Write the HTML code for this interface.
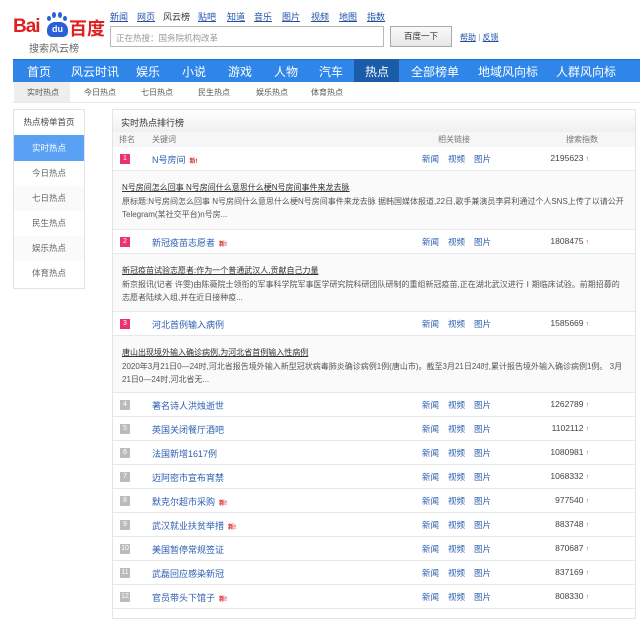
<!DOCTYPE html>
<html><head><meta charset="utf-8"><style>
*{margin:0;padding:0;box-sizing:border-box}
body{width:640px;height:612px;overflow:hidden;background:#fff;font-family:"Liberation Sans","Noto Sans CJK SC",sans-serif;font-size:8px;color:#333;position:relative}
.a{position:absolute;white-space:nowrap}
.tl a,.tl span{position:absolute;top:10px;color:#2250a8;text-decoration:underline;font-size:9px}
.nav{position:absolute;left:13px;top:59px;width:627px;height:23px;background:#2f86e8;border-top:1px solid #1c6fd4}
.nav span{position:absolute;top:3px;color:#fff;font-size:12px}
.sub span{position:absolute;top:87px;font-size:8px;color:#555}
.side{position:absolute;left:13px;top:109px;width:72px;height:180px;border:1px solid #e3e3e3}
.side div{height:25px;line-height:25px;text-align:center;font-size:8.5px;color:#666}
.panel{position:absolute;left:112px;top:109px;width:524px;height:510px;border:1px solid #e3e3e3}
.row{position:absolute;left:0;width:522px;height:24px;border-bottom:1px solid #e8e8e8;background:#fff}
.rk{position:absolute;left:7px;top:7px;width:10px;height:10px;font-size:7px;color:#fff;text-align:center;line-height:10px}
.kw{position:absolute;left:39px;top:6px;color:#2c5fb0;font-size:9px}
.kw i{color:#d22;font-style:normal;font-size:6px;font-weight:bold;margin-left:4px}
.lk{position:absolute;left:309px;top:6px;color:#2c5fb0;font-size:8.5px;word-spacing:0}
.lk b{font-weight:normal;margin-right:9px}
.num{position:absolute;right:46px;top:6px;font-size:8.5px;color:#444}
.num:after{content:"↑";color:#e33;font-size:7px;margin-left:2px;font-weight:bold}
.exp{position:absolute;left:0;width:522px;background:#fafafa;border-bottom:1px solid #e8e8e8;padding:10px 9px 0 9px;font-size:8px;line-height:13.5px;color:#555}
.exp u{color:#333}
</style></head><body>
<div class="a" style="left:13px;top:16px;font-size:19px;font-weight:bold;color:#e02020;letter-spacing:-1px">Bai</div>
<div class="a" style="left:47px;top:12px;width:20px;height:9px">
<span style="position:absolute;left:0;top:4px;width:4px;height:5px;background:#2a5fd8;border-radius:50%"></span>
<span style="position:absolute;left:5px;top:0;width:4px;height:6px;background:#2a5fd8;border-radius:50%"></span>
<span style="position:absolute;left:11px;top:0;width:4px;height:6px;background:#2a5fd8;border-radius:50%"></span>
<span style="position:absolute;left:16px;top:4px;width:4px;height:5px;background:#2a5fd8;border-radius:50%"></span></div>
<div class="a" style="left:47px;top:22px;width:21px;height:15px;background:#2a5fd8;border-radius:8px 8px 5px 5px;color:#fff;font-size:9px;text-align:center;line-height:15px;font-weight:bold">du</div>
<div class="a" style="left:69px;top:15px;font-size:18px;font-weight:bold;color:#e02020">百度</div>
<div class="a" style="left:29px;top:40px;font-size:10px;color:#666">搜索风云榜</div>
<div class="tl"><a style="left:110px">新闻</a><a style="left:137px">网页</a><span style="left:163px;color:#333;text-decoration:none">风云榜</span><a style="left:198px">贴吧</a><a style="left:227px">知道</a><a style="left:254px">音乐</a><a style="left:282px">图片</a><a style="left:311px">视频</a><a style="left:339px">地图</a><a style="left:367px">指数</a></div>
<div class="a" style="left:110px;top:26px;width:274px;height:21px;border:1px solid #b8b8b8;font-size:8.5px;color:#999;padding:5px 5px">正在热搜：国务院机构改革</div>
<div class="a" style="left:390px;top:26px;width:62px;height:21px;border:1px solid #aaa;background:linear-gradient(#fafafa,#e6e6e6);font-size:8.5px;text-align:center;line-height:19px;color:#333">百度一下</div>
<div class="a" style="left:460px;top:32px;font-size:8px;color:#999"><u style="color:#2250a8">帮助</u> | <u style="color:#2250a8">反馈</u></div>
<div class="nav">
<span style="left:14px">首页</span><span style="left:58px">风云时讯</span><span style="left:123px">娱乐</span><span style="left:169px">小说</span><span style="left:215px">游戏</span><span style="left:261px">人物</span><span style="left:306px">汽车</span>
<div style="position:absolute;left:341px;top:-1px;width:45px;height:23px;background:#1a5ca8"></div><span style="left:352px">热点</span>
<span style="left:398px">全部榜单</span><span style="left:465px">地域风向标</span><span style="left:543px">人群风向标</span></div>
<div class="sub"><div class="a" style="left:14px;top:82px;width:56px;height:20px;background:#eee"></div>
<span style="left:27px">实时热点</span><span style="left:84px">今日热点</span><span style="left:141px">七日热点</span><span style="left:198px">民生热点</span><span style="left:256px">娱乐热点</span><span style="left:311px">体育热点</span></div>
<div class="a" style="left:13px;top:102px;width:627px;height:1px;background:#e8e8e8"></div>
<div class="side"><div style="color:#444">热点榜单首页</div><div style="background:#5aa0f5;color:#fff;height:26px;line-height:26px">实时热点</div><div>今日热点</div><div style="background:#fafafa">七日热点</div><div>民生热点</div><div style="background:#fafafa">娱乐热点</div><div>体育热点</div></div>
<div class="panel">
<div style="position:absolute;left:0;top:0;width:522px;height:22px;background:linear-gradient(#fff,#f0f0f0);font-size:9px;padding:6px 8px;color:#333">实时热点排行榜</div>
<div style="position:absolute;left:0;top:22px;width:522px;height:15px;background:#f6f6f6;font-size:8px;color:#777"><span class="a" style="left:6px;top:2px">排名</span><span class="a" style="left:39px;top:2px">关键词</span><span class="a" style="left:325px;top:2px">相关链接</span><span class="a" style="left:453px;top:2px">搜索指数</span></div>
<div class="row" style="top:37px"><div class="rk" style="background:#e8336c">1</div><div class="kw">N号房间<i>新!</i></div><div class="lk"><b>新闻</b><b>视频</b><b>图片</b></div><div class="num">2195623</div></div>
<div class="exp" style="top:61px;height:59px"><u>N号房间怎么回事 N号房间什么意思什么梗N号房间事件来龙去脉</u><br>原标题:N号房间怎么回事 N号房间什么意思什么梗N号房间事件来龙去脉 据韩国媒体报道,22日,歌手兼演员李昇利通过个人SNS上传了以请公开Telegram(某社交平台)n号房...</div>
<div class="row" style="top:120px"><div class="rk" style="background:#e8336c">2</div><div class="kw">新冠疫苗志愿者<i>新!</i></div><div class="lk"><b>新闻</b><b>视频</b><b>图片</b></div><div class="num">1808475</div></div>
<div class="exp" style="top:144px;height:58px"><u>新冠疫苗试验志愿者:作为一个普通武汉人,贡献自己力量</u><br>新京报讯(记者 许雯)由陈薇院士领衔的军事科学院军事医学研究院科研团队研制的重组新冠疫苗,正在湖北武汉进行Ⅰ期临床试验。前期招募的志愿者陆续入组,并在近日接种疫...</div>
<div class="row" style="top:202px"><div class="rk" style="background:#e8336c">3</div><div class="kw">河北首例输入病例</div><div class="lk"><b>新闻</b><b>视频</b><b>图片</b></div><div class="num">1585669</div></div>
<div class="exp" style="top:226px;height:57px"><u>唐山出现境外输入确诊病例,为河北省首例输入性病例</u><br>2020年3月21日0—24时,河北省报告境外输入新型冠状病毒肺炎确诊病例1例(唐山市)。截至3月21日24时,累计报告境外输入确诊病例1例。 3月21日0—24时,河北省无...</div>
<div class="row" style="top:283px"><div class="rk" style="background:#bbb">4</div><div class="kw">著名诗人洪烛逝世</div><div class="lk"><b>新闻</b><b>视频</b><b>图片</b></div><div class="num">1262789</div></div>
<div class="row" style="top:307px"><div class="rk" style="background:#bbb">5</div><div class="kw">英国关闭餐厅酒吧</div><div class="lk"><b>新闻</b><b>视频</b><b>图片</b></div><div class="num">1102112</div></div>
<div class="row" style="top:331px"><div class="rk" style="background:#bbb">6</div><div class="kw">法国新增1617例</div><div class="lk"><b>新闻</b><b>视频</b><b>图片</b></div><div class="num">1080981</div></div>
<div class="row" style="top:355px"><div class="rk" style="background:#bbb">7</div><div class="kw">迈阿密市宣布宵禁</div><div class="lk"><b>新闻</b><b>视频</b><b>图片</b></div><div class="num">1068332</div></div>
<div class="row" style="top:379px"><div class="rk" style="background:#bbb">8</div><div class="kw">默克尔超市采购<i>新!</i></div><div class="lk"><b>新闻</b><b>视频</b><b>图片</b></div><div class="num">977540</div></div>
<div class="row" style="top:403px"><div class="rk" style="background:#bbb">9</div><div class="kw">武汉就业扶贫举措<i>新!</i></div><div class="lk"><b>新闻</b><b>视频</b><b>图片</b></div><div class="num">883748</div></div>
<div class="row" style="top:427px"><div class="rk" style="background:#bbb">10</div><div class="kw">美国暂停常规签证</div><div class="lk"><b>新闻</b><b>视频</b><b>图片</b></div><div class="num">870687</div></div>
<div class="row" style="top:451px"><div class="rk" style="background:#bbb">11</div><div class="kw">武磊回应感染新冠</div><div class="lk"><b>新闻</b><b>视频</b><b>图片</b></div><div class="num">837169</div></div>
<div class="row" style="top:475px"><div class="rk" style="background:#bbb">12</div><div class="kw">官员带头下馆子<i>新!</i></div><div class="lk"><b>新闻</b><b>视频</b><b>图片</b></div><div class="num">808330</div></div>
</div>
</body></html>
